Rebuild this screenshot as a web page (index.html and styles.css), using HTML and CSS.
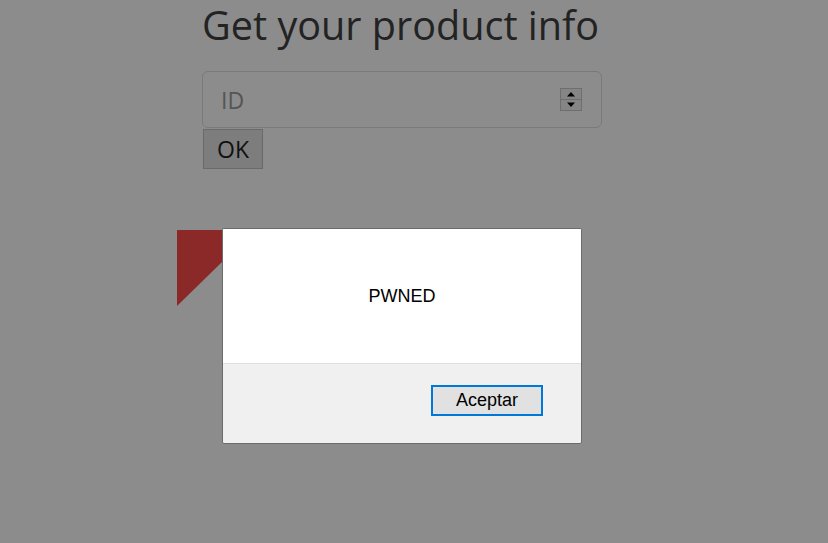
FILE: index.html
```html
<!DOCTYPE html>
<html>
<head>
<meta charset="utf-8">
<link rel="stylesheet" href="styles.css">
</head>
<body>
<main class="page">
  <h1 class="title">Get your product info</h1>
  <div class="field">
    <span class="placeholder">ID</span>
    <span class="spinner">
      <span class="spin-btn"><svg width="10" height="6" viewBox="0 0 10 6"><path d="M1 5.5 L5 1 L9 5.5 Z" fill="#000"/></svg></span>
      <span class="spin-btn"><svg width="10" height="6" viewBox="0 0 10 6"><path d="M1 0.5 L5 5 L9 0.5 Z" fill="#000"/></svg></span>
    </span>
  </div>
  <button class="ok">OK</button>
</main>
<div class="ribbon"></div>
<div class="dialog">
  <div class="dialog-body">PWNED</div>
  <div class="dialog-foot"><button class="accept">Aceptar</button></div>
</div>
</body>
</html>
```
FILE: styles.css
```css
html, body {
  margin: 0;
  padding: 0;
  height: 100%;
}
body {
  background: #8c8c8c;
  font-family: "Open Sans", "Noto Sans", sans-serif;
  overflow: hidden;
}
.page {
  width: 400px;
  margin-left: 202px;
  padding-top: 2px;
  display: flex;
  flex-direction: column;
  align-items: flex-start;
}
.title {
  margin: 0;
  font-weight: 400;
  font-size: 39.6px;
  line-height: 46px;
  color: #232323;
  white-space: nowrap;
  height: 69px;
}
.field {
  box-sizing: border-box;
  width: 400px;
  height: 57px;
  border: 1px solid #7a7a7a;
  border-radius: 6px;
  display: flex;
  align-items: center;
  justify-content: space-between;
  padding: 0 19px 0 18px;
}
.placeholder {
  font-size: 23px;
  color: #555;
}
.spinner {
  display: flex;
  flex-direction: column;
  border: 1px solid #6e6e6e;
  width: 20px;
}
.spin-btn {
  height: 10px;
  display: flex;
  align-items: center;
  justify-content: center;
  background: #858585;
}
.spin-btn + .spin-btn {
  border-top: 1px solid #6e6e6e;
}
.ok {
  margin: 1px 0 0 1px;
  width: 60px;
  height: 40px;
  background: #7d7d7d;
  border: 1px solid #6a6a6a;
  font-family: "Open Sans", "Noto Sans", sans-serif;
  font-size: 23px;
  color: #111;
  padding: 0;
}
.ribbon {
  position: absolute;
  left: 177px;
  top: 230px;
  width: 45px;
  height: 76px;
  background: #8b2828;
  clip-path: polygon(0 0, 100% 0, 100% 42%, 0 100%);
}
.dialog {
  position: absolute;
  left: 222px;
  top: 228px;
  width: 358px;
  height: 214px;
  border: 1px solid #6b6b6b;
  border-radius: 2px;
  background: #f0f0f0;
  display: flex;
  flex-direction: column;
  font-family: "Liberation Sans", Arial, sans-serif;
  overflow: hidden;
}
.dialog-body {
  height: 135px;
  background: #fff;
  border-bottom: 1px solid #dfdfdf;
  display: flex;
  align-items: center;
  justify-content: center;
  font-size: 18px;
  color: #000;
  padding-top: 1px;
  box-sizing: border-box;
}
.dialog-foot {
  flex: 1;
  display: flex;
  justify-content: flex-end;
  padding: 21px 38px 0 0;
}
.accept {
  width: 112px;
  height: 31px;
  box-sizing: border-box;
  border: 2px solid #0078d7;
  background: #e1e1e1;
  font-family: "Liberation Sans", Arial, sans-serif;
  font-size: 18px;
  color: #000;
  padding: 0;
}
```
